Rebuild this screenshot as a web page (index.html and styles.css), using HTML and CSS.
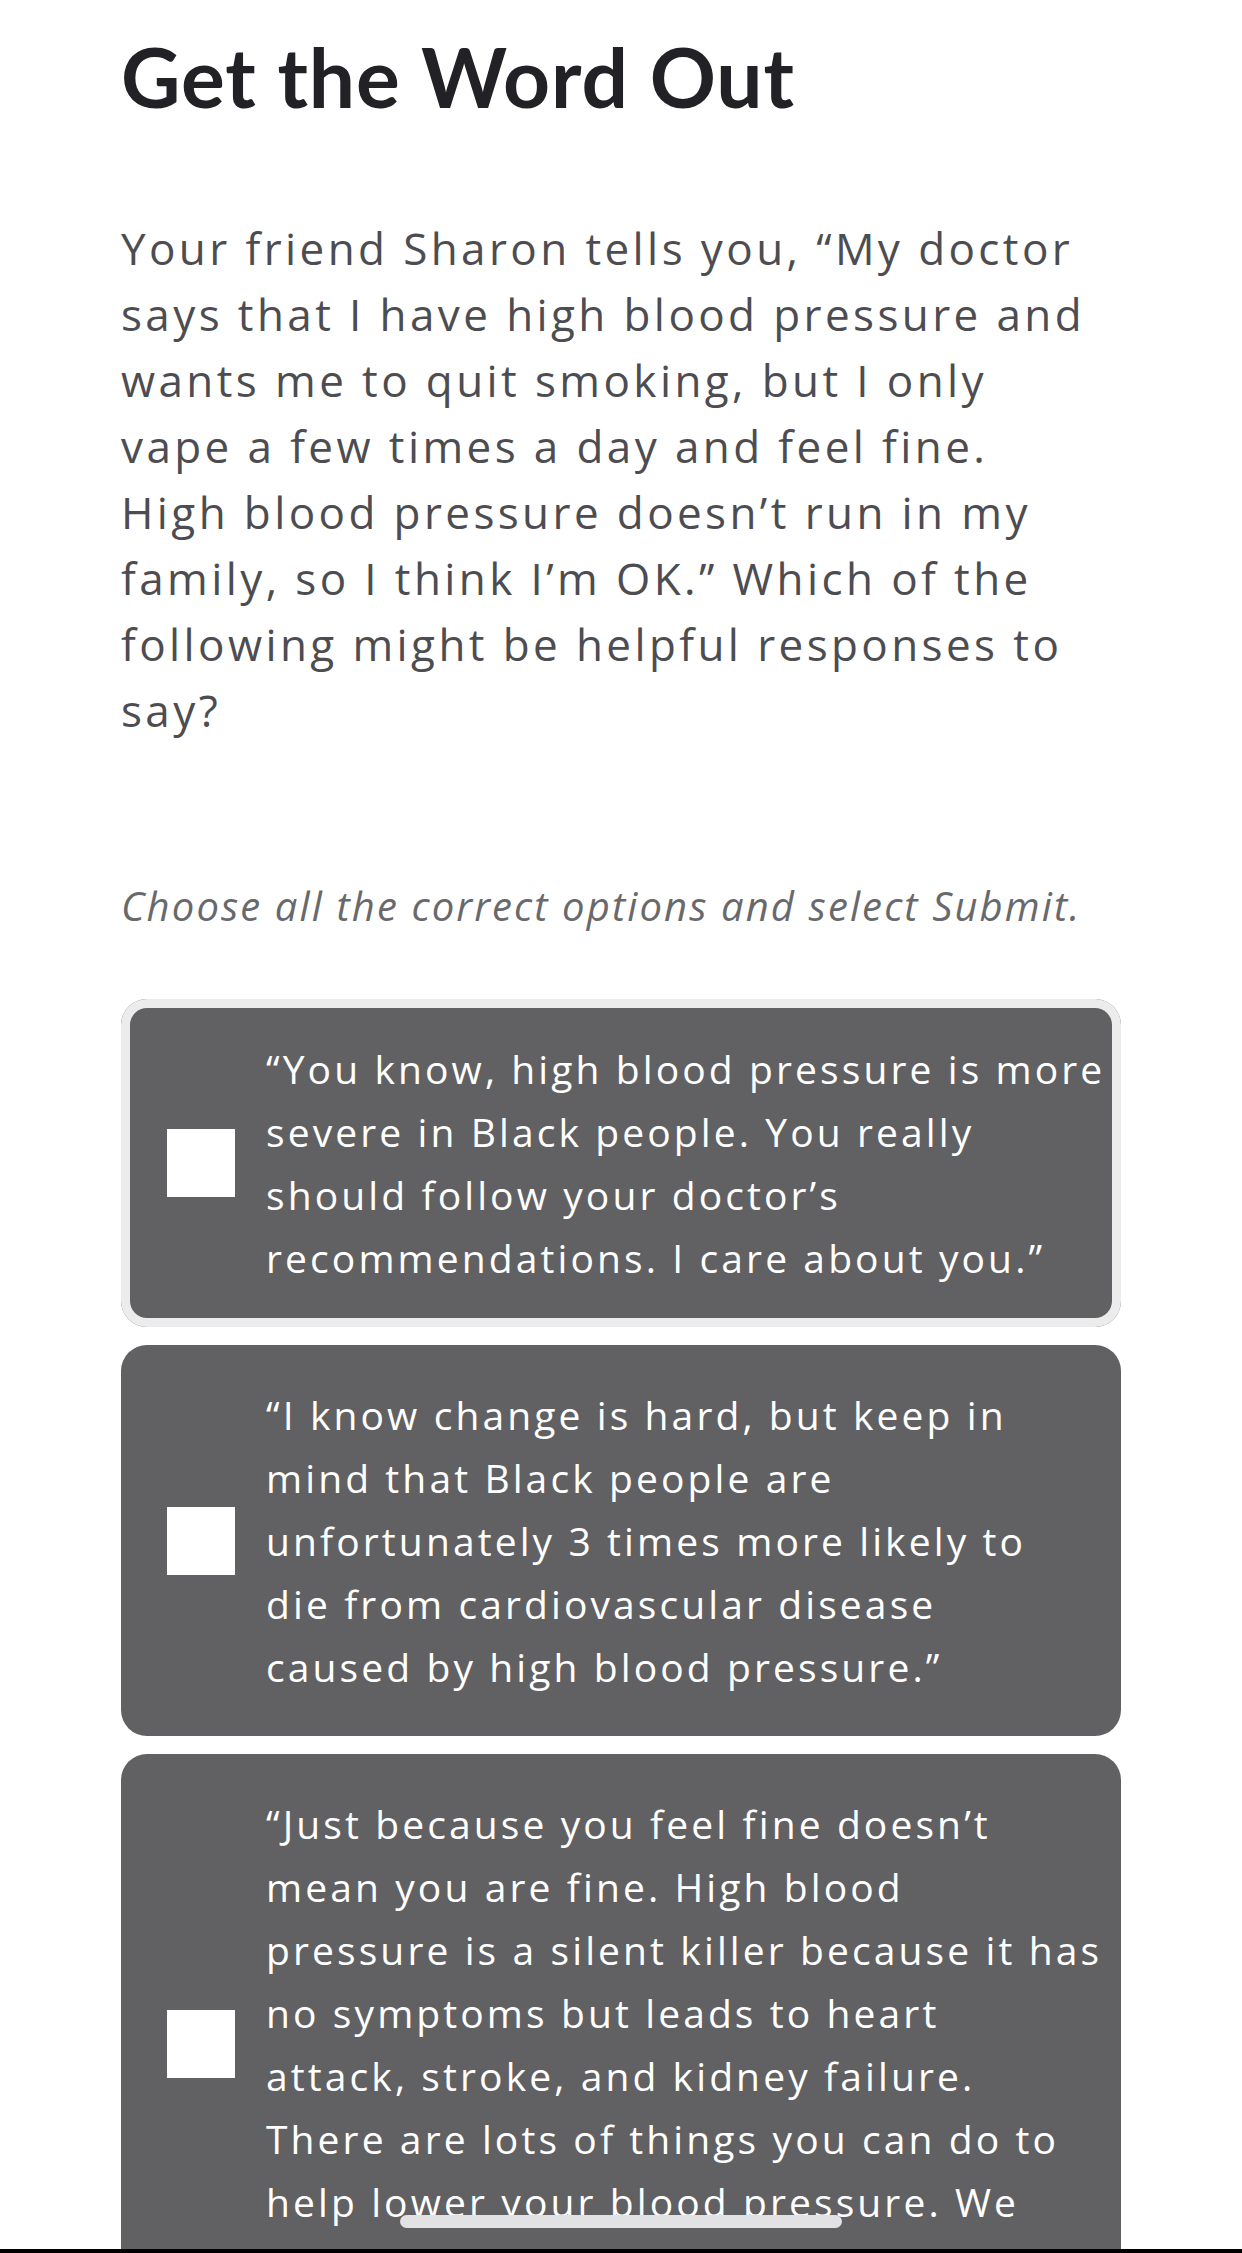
FILE: index.html
```html
<!DOCTYPE html>
<html lang="en">
<head>
<meta charset="utf-8">
<title>Get the Word Out</title>
<link rel="stylesheet" href="styles.css">
</head>
<body>
<main class="page">
  <h1 class="title">Get the Word Out</h1>
  <p class="prompt">Your friend Sharon tells you, “My doctor<br>says that I have high blood pressure and<br>wants me to quit smoking, but I only<br>vape a few times a day and feel fine.<br>High blood pressure doesn’t run in my<br>family, so I think I’m OK.” Which of the<br>following might be helpful responses to<br>say?</p>
  <p class="instruction">Choose all the correct options and select Submit.</p>
  <ul class="options">
    <li class="option option--focused">
      <span class="checkbox"></span>
      <span class="option-text">“You know, high blood pressure is more<br>severe in Black people. You really<br>should follow your doctor’s<br>recommendations. I care about you.”</span>
    </li>
    <li class="option">
      <span class="checkbox"></span>
      <span class="option-text">“I know change is hard, but keep in<br>mind that Black people are<br>unfortunately 3 times more likely to<br>die from cardiovascular disease<br>caused by high blood pressure.”</span>
    </li>
    <li class="option">
      <span class="checkbox"></span>
      <span class="option-text">“Just because you feel fine doesn’t<br>mean you are fine. High blood<br>pressure is a silent killer because it has<br>no symptoms but leads to heart<br>attack, stroke, and kidney failure.<br>There are lots of things you can do to<br>help lower your blood pressure. We<br>can even do this together.”</span>
    </li>
  </ul>
</main>
<div class="home-indicator"></div>
<div class="bottom-edge"></div>
</body>
</html>
```
FILE: styles.css
```css
html, body {
  margin: 0;
  background: #ffffff;
}

.page {
  padding: 0 121px 40px;
}

.title {
  margin: 27px 0 0;
  font-family: Lato, "Open Sans", sans-serif;
  font-weight: 700;
  font-size: 82px;
  line-height: 98px;
  color: #222226;
  letter-spacing: 0.9px;
}

.prompt {
  margin: 90px 0 0;
  font-family: "Open Sans", Lato, sans-serif;
  font-size: 44px;
  line-height: 66px;
  color: #4d4d51;
  letter-spacing: 3.4px;
  white-space: nowrap;
}

.instruction {
  margin: 135px 0 0;
  font-family: "Open Sans", Lato, sans-serif;
  font-style: italic;
  font-size: 40px;
  line-height: 56px;
  color: #69696c;
  letter-spacing: 2.1px;
  white-space: nowrap;
}

.options {
  list-style: none;
  margin: 65px 0 0;
  padding: 0;
  display: flex;
  flex-direction: column;
  gap: 18px;
}

.option {
  display: flex;
  align-items: center;
  gap: 31px;
  padding: 38px 10px 38px 46px;
  background: #616163;
  border-radius: 26px;
  color: #ffffff;
  font-family: "Open Sans", Lato, sans-serif;
  font-size: 39px;
  line-height: 63px;
  letter-spacing: 3.1px;
}

.option--focused {
  box-shadow: inset 0 0 0 9px #ececec;
}

.checkbox {
  flex: none;
  width: 68px;
  height: 68px;
  background: #ffffff;
}

.option-text {
  white-space: nowrap;
}

.home-indicator {
  position: fixed;
  left: 400px;
  bottom: 25px;
  width: 442px;
  height: 13px;
  border-radius: 7px;
  background: #e2e2e4;
}

.bottom-edge {
  position: fixed;
  left: 0;
  right: 0;
  bottom: 0;
  height: 4px;
  background: #000000;
}
```
